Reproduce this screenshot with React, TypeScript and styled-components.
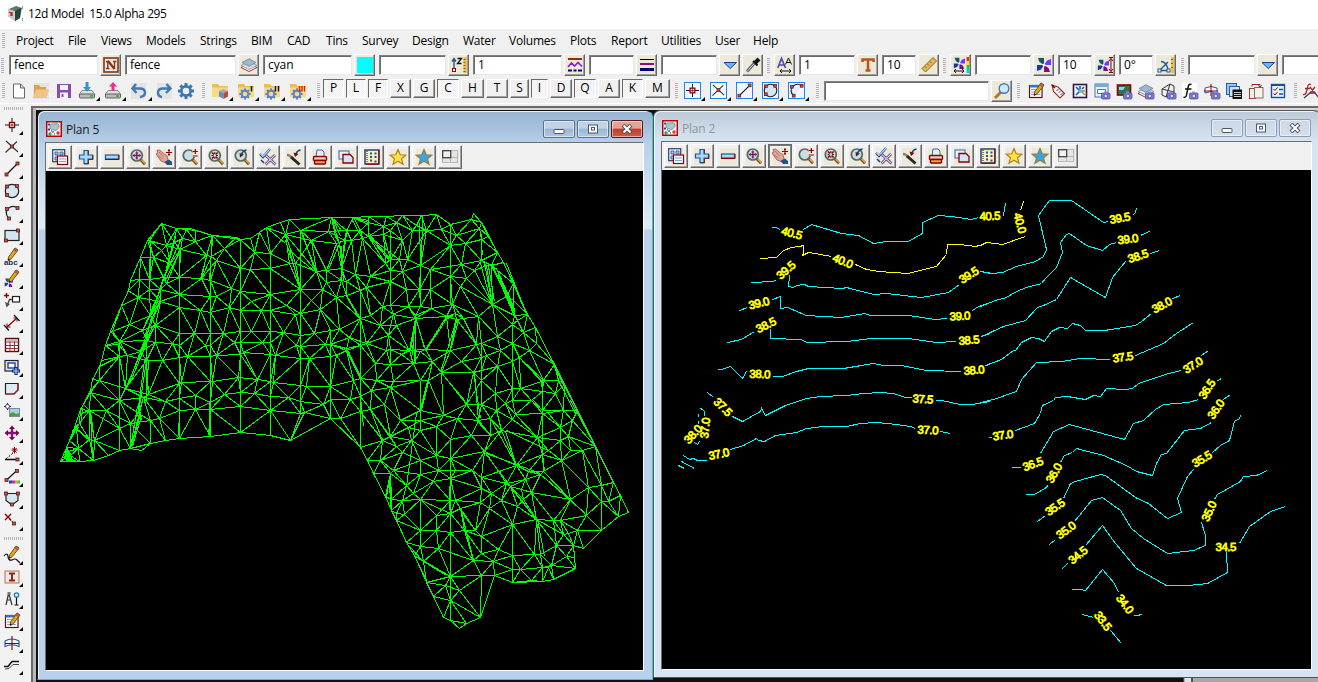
import React from "react";
import styled, { createGlobalStyle, css } from "styled-components";

const Global = createGlobalStyle`
  * { box-sizing: border-box; }
  html, body { margin: 0; padding: 0; overflow: hidden; }
  body { font-family: "Open Sans", "Noto Sans", sans-serif; font-size: 12px; letter-spacing: -0.38px; color: #000; background: #f0f0f0; }
  svg { display: block; }
`;

/* ------------------------------------------------------------------ */
/* Icons                                                               */
/* ------------------------------------------------------------------ */

const R = "#8b0000";
const B = "#1e5799";
const K = "#111";
const N = "none";

const Dot = ({ x, y }: { x: number; y: number }) => (
  <rect x={x - 1.5} y={y - 1.5} width="3" height="3" fill="#b05555" stroke="#6d1a1a" strokeWidth=".8" />
);
const Camera = () => (
  <g>
    <rect x="7.500" y="10" width="8.500" height="6" rx="1" fill="#7c7cd0" stroke="#5050a8" strokeWidth=".8" />
    <rect x="10" y="8.500" width="3" height="2" fill="#8888d8" />
    <circle cx="11.800" cy="13" r="1.800" fill="#dde" stroke="#44a" strokeWidth=".7" />
  </g>
);
const Pencil = ({ x = 0, y = 0 }: { x?: number; y?: number }) => (
  <g transform={`translate(${x} ${y})`}>
    <path d="M12 0 L15 2 L8 11 L5 12.5 L5.500 9Z" fill="#e0a818" stroke="#6b4a10" strokeWidth=".9" />
    <path d="M12 0 L15 2 L13.500 4 L10.800 2Z" fill="#c06060" stroke="#903030" strokeWidth=".5" />
    <path d="M5 12.500 L5.300 10.500 L7 11.500Z" fill={K} />
  </g>
);
const Lens = ({ children }: { children?: React.ReactNode }) => (
  <g>
    <path d="M10.500 10.500 L15 15.200" stroke="#7a4c1c" strokeWidth="2.800" />
    <path d="M11.500 11 L15.200 14.700" stroke="#e0b060" strokeWidth="1.100" />
    <circle cx="6.800" cy="6.500" r="5.500" fill="#c6dfe0" stroke="#566668" strokeWidth="1.700" />
    {children}
  </g>
);
const Gear = ({ c = "#3a76b4", x = 8, y = 8, s = 1 }: { c?: string; x?: number; y?: number; s?: number }) => (
  <g transform={`translate(${x} ${y}) scale(${s})`}>
    <circle r="4.600" fill={N} stroke={c} strokeWidth="2.600" />
    {[0, 45, 90, 135, 180, 225, 270, 315].map((a) => (
      <rect key={a} x="-1.500" y="-8" width="3" height="3.500" fill={c} transform={`rotate(${a})`} />
    ))}
  </g>
);
const Folder = ({ children }: { children?: React.ReactNode }) => (
  <g>
    <path d="M0 1 h6 l1.500 2 h8.500 v11 H0Z" fill="#e6bf57" />
    <path d="M0 4.500 h16 v9.500 H0Z" fill="#f8da83" />
    {children}
  </g>
);
const Pinwheel = ({ x = 0, y = 0, s = 1 }: { x?: number; y?: number; s?: number }) => (
  <g transform={`translate(${x} ${y}) scale(${s})`}>
    <path d="M8 8 L8 1 L2 1 L3.500 5Z" fill="#0a5a6a" />
    <path d="M8 8 L15 8 L15 2 L11 3.500Z" fill="#7038ff" />
    <path d="M8 8 L8 15 L14 15 L12.500 11Z" fill="#7a1080" />
    <path d="M8 8 L1 8 L1 14 L5 12.500Z" fill="#1838a0" />
    <circle cx="8" cy="8" r="1.500" fill="#fff" />
  </g>
);
const Layers = () => (
  <g>
    <path d="M0 10.500 L8 6.500 L16 10.500 L8 14.500Z" fill="#fff" stroke="#b03030" strokeWidth="1" />
    <path d="M0 8.500 L8 4.500 L16 8.500 L8 12.500Z" fill="#d5e0e8" stroke="#8090a0" strokeWidth=".8" />
    <path d="M1 5.500 L8 1.800 L15 5.500 L8 9.300Z" fill="#9db8d0" stroke="#6c8298" strokeWidth=".8" />
  </g>
);
const Drive = ({ up }: { up?: boolean }) => (
  <g>
    <path d="M3 7.500 h10 l3 4 H0Z" fill="#ddd" stroke="#777" strokeWidth=".8" />
    <rect x=".5" y="11" width="15" height="4" rx="1" fill="#bbb" stroke="#555" strokeWidth=".9" />
    <rect x="11" y="12" width="3" height="2" fill="#40c020" />
    {up ? <path d="M8 -1 L12 3.500 H9.500 V8 H6.500 V3.500 H4Z" fill="#f0308a" /> : <path d="M8 8.500 L12 4 H9.500 V-1 H6.500 V4 H4Z" fill="#2f96d0" />}
  </g>
);
const Star = ({ f, s }: { f: string; s: string }) => (
  <path d="M8 0.500 L10.200 5.800 L15.800 6.200 L11.500 9.800 L13 15.300 L8 12.200 L3 15.300 L4.500 9.800 L.2 6.200 L5.800 5.800Z" fill={f} stroke={s} strokeWidth="1.200" />
);

const icons: Record<string, React.ReactNode> = {
  app: (
    <g>
      <path d="M2 4 L9 1 L15 3 L13 13 L8 16 L1 11Z" fill="#5d776c" />
      <path d="M8 6 L14 3 L13 13 L8 16Z" fill="#28453a" />
      <path d="M1 4 L8 6 L8 16 L1 11Z" fill="#c9cfca" />
      <path d="M2 7 l2 1 v3 M5 7 v4" stroke="#c02020" fill={N} strokeWidth="1.300" />
      <path d="M15.500 1 v3 M15.500 13 v3" stroke="#999" />
    </g>
  ),
  nameN: (
    <g>
      <rect x="1" y="1" width="14" height="14" fill="#e8e8f4" stroke="#8c3208" strokeWidth="1.600" />
      <path d="M3 4.500 H6 M10 4.500 h3.500 M3 11.500 h3.500" stroke="#8c3208" strokeWidth="1.400" fill={N} />
      <path d="M4.800 4 V12 M11.500 4 V12" stroke="#8c3208" strokeWidth="1.300" />
      <path d="M5 4 L11.500 12" stroke="#8c3208" strokeWidth="2.300" />
    </g>
  ),
  layers: <Layers />,
  cyan: <rect x="0" y="0" width="16" height="16" fill="#00ffff" />,
  zruler: (
    <g>
      <path d="M3 12 V2 M1 4.500 L3 1.500 L5 4.500" stroke={B} strokeWidth="1.400" fill={N} />
      <rect x="1.500" y="11.500" width="3" height="3" fill="#fff" stroke={R} />
      <path d="M6.500 1.500 h4 L6.500 6.500 h4" stroke={K} strokeWidth="1.300" fill={N} />
      <rect x="12.500" y="0" width="3.500" height="16" fill="#e8c25a" />
      <path d="M12.500 2.500h2M12.500 5.500h2M12.500 8.500h2M12.500 11.500h2M12.500 14.500h2" stroke="#806000" />
    </g>
  ),
  linestyle: (
    <g>
      <rect x="1" y="1" width="14" height="2" fill="#8c3208" />
      <path d="M1 10 L4.500 6 L7.500 9 L11 5.500 L15 9.500" stroke="#8020e0" fill={N} strokeWidth="1.600" />
      <path d="M1 13.500 h4 M6.500 13.500 h3 M11 13.500 h4" stroke="#000080" strokeWidth="2" />
    </g>
  ),
  weight: (
    <g>
      <rect x="1" y="2" width="14" height="1" fill="#000" />
      <rect x="1" y="6" width="14" height="2" fill="#8c1070" />
      <rect x="1" y="11" width="14" height="3" fill="#000080" />
    </g>
  ),
  down: <path d="M2 5.500 H14.500 L8.250 11.500Z" fill="#6ab4ff" stroke="#20408a" strokeWidth="1" />,
  dropper: (
    <g>
      <path d="M2 14.500 L9 6.500" stroke="#555" strokeWidth="2.800" />
      <path d="M2 14.500 L9 6.500" stroke="#cfe4ff" strokeWidth="1" />
      <path d="M8 4 L12.500 8.500" stroke={K} strokeWidth="2" />
      <path d="M10 6 L14 2" stroke={K} strokeWidth="4" />
    </g>
  ),
  fontsize: (
    <g>
      <path d="M.8 11 L4.500 1.500 L8.500 11 M2.500 8 H7" stroke="#4848b0" strokeWidth="1.600" fill={N} />
      <path d="M8.500 7.500 L11.500 1 L14.500 7.500 M9.500 5.500 h4" stroke={K} fill={N} />
      <path d="M3 14 H14 M5 12 L3 14 L5 16 M12 12 L14 14 L12 16" stroke={K} fill={N} />
    </g>
  ),
  bigT: <path d="M2.500 5 V2.500 H13.500 V5 M8 2.500 V13 M5.500 13.500 H10.500" stroke="#b5581c" strokeWidth="2.600" fill={N} />,
  ruler: (
    <g>
      <path d="M1 11.500 L12 .5 L15.500 4 L4.500 15Z" fill="#e5b653" stroke="#8a6420" />
      <path d="M4 9.500 l1.500 1.500 M6.500 7 l1.500 1.500 M9 4.500 l1.500 1.500" stroke="#7a5420" />
    </g>
  ),
  symsize: (
    <g>
      <Pinwheel s={0.8} />
      <path d="M1 14 H11 M3 12 L1 14 L3 16 M9 12 L11 14 L9 16" stroke={K} fill={N} />
      <rect x="13.500" y="0" width="2.500" height="4" fill="#f22" />
      <rect x="13.500" y="4" width="2.500" height="4" fill="#fd0" />
      <rect x="13.500" y="8" width="2.500" height="4" fill="#0d4" />
      <rect x="13.500" y="12" width="2.500" height="4" fill="#0cf" />
    </g>
  ),
  pinwheel: <Pinwheel />,
  pinheight: (
    <g>
      <Pinwheel s={0.8} y={2} />
      <path d="M14 1.500 V14.500 M12 .5 h4 M12 15.500 h4 M12 4 L14 1.500 L16 4 M12 12 L14 14.500 L16 12" stroke={R} fill={N} />
    </g>
  ),
  angle: (
    <g>
      <path d="M1.500 13.500 L10 5 M1.500 13.500 H10 M3 4.500 Q8 4.500 10 12" stroke={B} strokeWidth="1.400" fill={N} />
      <rect x="0" y="12" width="3" height="3" fill="#fff" stroke={B} />
      <rect x="9" y="12" width="3" height="3" fill="#fff" stroke={B} />
      <rect x="13" y="0" width="3" height="16" fill="#e8c25a" />
      <path d="M13 2.500h2M13 6.500h2M13 10.500h2" stroke="#806000" />
    </g>
  ),
  newfile: <path d="M2.500 1 H9.500 L13.500 5 V15 H2.500Z M9.500 1 V5 H13.500" fill="#fff" stroke="#666" />,
  open: (
    <g>
      <rect width="16" height="16" fill="#e4e4e4" />
      <path d="M1 2 h5 l1.500 2 H13 V14 H1Z" fill="#d8a350" />
      <path d="M0 15 L3 6.500 H16 L13.500 15Z" fill="#f0c583" />
    </g>
  ),
  save: (
    <g>
      <path d="M1 1 H15 V15 H1Z" fill="#8a4bab" />
      <rect x="4" y="2" width="8" height="5" fill="#f4f4f4" />
      <rect x="4" y="9.500" width="8" height="5.500" fill="#f4f4f4" />
      <rect x="5.500" y="11" width="2" height="3" fill="#8a4bab" />
    </g>
  ),
  importD: <Drive />,
  exportD: <Drive up />,
  undo: <g><rect width="15" height="16" fill="#e4e4e4" /><path d="M1 5.500 H9 Q14 5.500 14 9.500 Q14 13.500 9 14 M5 1 L1.500 5.500 L5.500 10" stroke="#3f79b7" strokeWidth="2.400" fill={N} /></g>,
  redo: <g><rect x="1" width="15" height="16" fill="#e4e4e4" /><path d="M15 5.500 H7 Q2 5.500 2 9.500 Q2 13.500 6 14 M10.500 1 L14.500 5.500 L10 10" stroke="#3f79b7" strokeWidth="2.400" fill={N} /></g>,
  gear: <Gear />,
  folderCube: (
    <Folder>
      <path d="M7 8 L11.500 6 L16 8 L11.500 10Z" fill="#aaa" />
      <path d="M7 8 L11.500 10 V16 L7 13.500Z" fill="#6a8cc0" />
      <path d="M16 8 L11.500 10 V16 L16 13.500Z" fill="#b84a3a" />
    </Folder>
  ),
  folder1: <Folder><Gear c="#5a84cc" x={7} y={11} s={0.7} /><path d="M13.500 3 V8.500" stroke={K} strokeWidth="1.600" /></Folder>,
  folder2: <Folder><Gear c="#5a84cc" x={7} y={11} s={0.7} /><path d="M11.500 3 V8.500 M14.500 3 V8.500" stroke={K} strokeWidth="1.400" /></Folder>,
  folder3: <Folder><Gear c="#5a84cc" x={7} y={11} s={0.7} /><path d="M9.500 3 V8.500 M12 3 V8.500 M14.500 3 V8.500" stroke="#e02000" strokeWidth="1.400" /></Folder>,
  point: (
    <g>
      <path d="M8 1 V15 M1 8 H15" stroke={K} />
      <rect x="5.500" y="5.500" width="5" height="5" fill="#fff" stroke={R} strokeWidth="1.400" />
      <path d="M8 6.500 v3 M6.500 8 h3" stroke={R} strokeWidth=".8" />
    </g>
  ),
  cross: (
    <g>
      <path d="M2 2 L14 13 M13 2.500 L1.500 13.500" stroke="#333" strokeWidth="1.100" />
      <Dot x={8} y={7.500} />
    </g>
  ),
  line: (
    <g>
      <path d="M2.500 13.500 L13.500 2.500" stroke={K} strokeWidth="1.200" />
      <Dot x={2.500} y={13.500} />
      <Dot x={13.500} y={2.500} />
    </g>
  ),
  circle: (
    <g>
      <circle cx="8" cy="8" r="6.700" fill="#d3e6f2" stroke="#222" strokeWidth="1.200" />
      <Dot x={13} y={3} />
      <Dot x={3} y={12} />
      <Dot x={3} y={3.500} />
    </g>
  ),
  arc: (
    <g>
      <path d="M5 14 Q0 8 4 3.500 Q9 -.5 14 3Z" fill="#e4eef6" />
      <path d="M5 14 Q0 8 4 3.500 Q9 -.5 14 3" fill={N} stroke="#222" strokeWidth="1.200" />
      <Dot x={13.500} y={3} />
      <Dot x={5} y={13.500} />
      <Dot x={3} y={4} />
    </g>
  ),
  rect: (
    <g>
      <rect x="1" y="3.500" width="14" height="10" fill="#d3e6f2" stroke="#222" strokeWidth="1.200" />
      <Dot x={14} y={3.500} />
      <Dot x={2} y={13.500} />
    </g>
  ),
  abc: (
    <g>
      <Pencil x={-1} y={-1} />
      <text x="0" y="16" fontSize="8" fontWeight="700" fill="#18344e" fontFamily="Liberation Sans, sans-serif" letterSpacing="-.1">abc</text>
    </g>
  ),
  symbolPen: (
    <g>
      <Pinwheel s={0.6} y={7} />
      <Pencil y={-1} />
    </g>
  ),
  leader: (
    <g>
      <path d="M0 2.500 H5 M2.500 0 V5" stroke={R} strokeWidth="1.400" />
      <rect x="8.500" y="3.500" width="7" height="5.500" fill="#fff" stroke="#222" strokeWidth="1.200" />
      <path d="M8 6.500 H5.500 L3 13" stroke="#444" fill={N} strokeWidth="1.300" />
      <path d="M1 9 L2.500 14.500 L6 11Z" fill="#555" />
    </g>
  ),
  dim: (
    <g>
      <path d="M3 12 L13 3" stroke={R} strokeWidth="1.200" />
      <path d="M3 8.500 V12 H6.500 M13 6.500 V3 H9.500" stroke={R} fill={N} />
      <path d="M0 10 L5 15.500 M10 0 L15.500 6" stroke={K} strokeWidth="1.200" />
    </g>
  ),
  table: (
    <g>
      <rect x="1.500" y="1.500" width="13" height="13" fill="#fff" stroke="#501010" strokeWidth="1.400" />
      <path d="M1.500 5 H14.500 M1.500 8.500 H14.500 M1.500 11.500 H14.500 M6 2 V14.500 M10.500 2 V14.500" stroke="#a02828" />
      <rect x="2" y="2" width="12" height="2.500" fill="#d8b0b0" />
    </g>
  ),
  viewport: (
    <g>
      <rect x="1" y="1.500" width="13" height="10.500" fill="#dfe8f0" stroke="#222" strokeWidth="1.200" />
      <rect x="4" y="4" width="7" height="5" fill="#fff" stroke="#1030a0" strokeWidth="1.300" />
      <path d="M12 8 V16 M8 12 H16" stroke="#102080" strokeWidth="3.200" />
      <path d="M12 9 V15 M9 12 H15" stroke="#9ed8ff" strokeWidth="1.200" />
    </g>
  ),
  sheet: (
    <g>
      <path d="M1.500 2.500 H14 V9 L10 13 H1.500Z" fill="#e0eaf2" stroke="#222" strokeWidth="1.200" />
      <path d="M14 3 V9 L10 13 H1.500" fill={N} stroke="#a02020" strokeWidth="1.200" />
    </g>
  ),
  image: (
    <g>
      <path d="M3.500 0 V7 M0 3.500 H7" stroke={R} strokeWidth="1.200" />
      <circle cx="3.500" cy="3.500" r="2" fill="#fff" stroke="#2050a0" />
      <rect x="5.500" y="5.500" width="10" height="8" fill="#9cd4f8" stroke="#888" />
      <path d="M6 13 V10.500 L9 9 L12 11 L15 10 V13Z" fill="#50a030" />
    </g>
  ),
  move: (
    <g>
      <path d="M8 3 V13 M3 8 H13" stroke="#8a1080" strokeWidth="2.400" fill={N} />
      <path d="M8 .5 L11 4 H5Z M8 15.500 L11 12 H5Z M.5 8 L4 5 V11Z M15.500 8 L12 5 V11Z" fill="#7a0a3a" />
    </g>
  ),
  bearing: (
    <g>
      <path d="M1 12.500 H13" stroke={K} strokeWidth="1.600" />
      <path d="M2 12 L9 6" stroke={K} strokeDasharray="2 1.500" />
      <path d="M10.500 0 V6.500 M7.500 3 H13.500 M8.500 1 L12.500 5.500 M12.500 1 L8.500 5.500" stroke={R} />
      <Dot x={13.500} y={12.500} />
    </g>
  ),
  colorline: (
    <g>
      <path d="M2 11.500 L13 1.500" stroke={K} strokeWidth="1.200" />
      <Dot x={13} y={2} />
      <Dot x={2.500} y={11} />
      <rect x="5" y="11.500" width="3" height="3" fill="#2040e0" />
      <rect x="8" y="11.500" width="3" height="3" fill="#e020c0" />
      <rect x="11" y="11.500" width="2.500" height="3" fill="#f0a000" />
      <rect x="13.500" y="11.500" width="2.500" height="3" fill="#20d040" />
    </g>
  ),
  polygon: (
    <g>
      <path d="M2 2.500 H14 V9.500 L8 14 L2 9.500Z" fill="#d5e6ee" stroke="#222" strokeWidth="1.200" />
      <Dot x={2} y={2.500} />
      <Dot x={14} y={2.500} />
      <Dot x={8} y={13.500} />
    </g>
  ),
  delpoint: (
    <g>
      <path d="M1 1 L7 7 M7 1 L1 7" stroke={R} strokeWidth="1.400" />
      <path d="M5.500 6.500 L9 9" stroke={K} strokeDasharray="1.500 1" />
      <Dot x={10} y={10.500} />
    </g>
  ),
  sketch: (
    <g>
      <Pencil y={-1} />
      <path d="M0 9 Q3 5 4 9 Q4 14 8 13 Q11 11 13 13 L16 16" fill={N} stroke={K} strokeWidth="1.200" />
    </g>
  ),
  ibeam: (
    <g>
      <rect x="1" y="2" width="14" height="12" fill="#e8e6ee" stroke="#c07048" />
      <path d="M5 4.500 H11 M8 4.500 V11.500 M5 11.500 H11" stroke="#8c2c08" strokeWidth="2" />
    </g>
  ),
  survey: (
    <g>
      <path d="M4.500 3 L2 14 M5 3 L8 14 M3.500 9 H6.500" stroke="#333" strokeWidth="1.200" />
      <rect x="3.500" y="1" width="3" height="3" fill="#777" />
      <circle cx="12.500" cy="4" r="2.200" fill="#dff0ff" stroke="#1880c8" strokeWidth="1.300" />
      <path d="M12.500 6.500 V14 M10.500 14 h4" stroke={K} strokeWidth="1.200" />
    </g>
  ),
  notepen: (
    <g>
      <rect x="1.500" y="2.500" width="12.500" height="12" fill="#fff" stroke="#601018" strokeWidth="1.200" />
      <rect x="1.500" y="2" width="12" height="2.500" fill="#3870c8" />
      <path d="M3 6.500 h9 M3 9 h9 M3 11.500 h9" stroke="#8aa0d0" />
      <Pencil x={1} />
    </g>
  ),
  section: (
    <g>
      <path d="M1 11.500 V6 Q8 2 15 6 V11.500 Q8 8 1 11.500Z" fill="#f6f8ff" stroke="#3050a0" strokeWidth="1.100" />
      <path d="M8 1 V15 M1 8.500 H15" stroke={R} strokeWidth="1.100" />
    </g>
  ),
  ramp: (
    <g>
      <path d="M0 9.500 H4 L8 4.500 H15" stroke={K} strokeWidth="1.500" fill={N} />
      <path d="M1 12 L5 11.500 L9 7.500 H15" stroke="#444" strokeWidth="1" fill={N} />
    </g>
  ),
  search: (
    <g>
      <path d="M1 15 L7 9" stroke="#b07828" strokeWidth="3" />
      <circle cx="10" cy="5.500" r="4.800" fill="#cdeafa" stroke="#4878b0" strokeWidth="1.400" />
    </g>
  ),
  tag: (
    <g>
      <path d="M2 2 L8 4 L14.500 10.500 L10 15 L3.500 8.500Z" fill="#fff" stroke="#a03020" strokeWidth="1.200" />
      <path d="M2 2 L5 5" stroke={R} strokeWidth="1.600" />
      <path d="M6.500 8 L9 5.500 M8.500 10 L11 7.500 M10.500 12 L13 9.500" stroke="#385090" />
    </g>
  ),
  network: (
    <g>
      <rect x="1.500" y="1.500" width="13" height="13" fill="#eef6ff" stroke="#301840" strokeWidth="1.600" />
      <path d="M4 4 l4 4 -4 4 M8 3 v3 M12 4 l-2 2" stroke="#1860b0" strokeWidth="1.600" fill={N} />
      <path d="M10 9 l3 3 M10 8 h3" stroke="#d08020" strokeWidth="1.400" />
      <circle cx="8.500" cy="8" r="1.800" fill="#60b0f0" />
    </g>
  ),
  camView: <g><rect x="1" y="1" width="13" height="13" fill="#e8f2fb" stroke="#4878b0" /><rect x="1" y="1" width="13" height="3" fill="#78a8d8" /><path d="M3.500 6.500h8v4h-8z" fill="#fff" stroke="#4878b0" /><Camera /></g>,
  camImage: <g><rect x="1.500" y="2" width="13" height="10" fill="#2a7a4a" stroke={R} strokeWidth="1.600" /><path d="M3 4 h6 l-2 3 h-4z" fill="#9cf" /><Camera /></g>,
  camLayers: <g><Layers /><Camera /></g>,
  camMesh: <g><path d="M2 6 L10 1 L14 3 V12 L6 14 L2 12Z M2 6 L14 9 M10 1 L6 14" fill="#eee" stroke="#333" /><Camera /></g>,
  camFx: <g><rect width="15" height="16" fill="#fff" /><path d="M9.500 1.500 Q6.500 0 6 5 L4.500 12 Q4 15 1.500 14 M3 6 H9.500" fill={N} stroke={K} strokeWidth="1.500" /><Camera /></g>,
  camSection: <g><path d="M1 10 V5 Q7 2 13 5 V10 Q7 7 1 10Z" fill="#fff" stroke="#3050a0" /><path d="M7 1 V13 M0 8 H14" stroke={R} /><Camera /></g>,
  windows: <g><rect x=".5" y=".5" width="10" height="11" fill="#9cc4ec" stroke="#2860a8" /><rect x="3.500" y="3.500" width="10" height="10" fill="#cfe2f6" stroke="#2860a8" /><rect x="6.500" y="6.500" width="9.500" height="9.500" fill="#111" /><path d="M8 9.500h7M8 11.500h7M8 13.500h7" stroke="#ccc" /></g>,
  papers: <g><rect x="1.500" y="5.500" width="6" height="10" fill="#eee" stroke="#a04030" /><rect x="6.500" y="4.500" width="8.500" height="10.500" fill="#f4f4e8" stroke="#807060" /><path d="M4 3.500 V1.500 h8 v3 M10.500 2.500 l1.500 2 1.500 -2" stroke="#a02020" fill={N} /></g>,
  checklist: <g><rect x="1.500" y="1.500" width="13" height="13" fill="#e8f2fb" stroke="#1850a0" strokeWidth="1.400" /><rect x="1.500" y="1" width="13" height="2" fill="#1850a0" /><path d="M3.500 6 l1.500 1.500 2.500 -3 M3.500 10.500 l1.500 1.500 2.500 -3" stroke={R} fill={N} /><path d="M9 6.500h4M9 11h4" stroke="#1850a0" strokeWidth="1.500" /></g>,
  fx: <g><path d="M8 1.500 Q5 0 4.500 5 L3 10 Q2.500 12 0 11.500 M2 5.500 H7 M7 4 L12 10 M12 4 L7 10" stroke="#a02828" fill={N} strokeWidth="1.300" /><path d="M1 15 L7 10 L12 10 L16 15" stroke="#444" fill={N} strokeWidth="1.300" /></g>,
  viewmenu: (
    <g>
      <rect x=".7" y=".7" width="12" height="12" fill="#e8f0fa" stroke="#204080" strokeWidth="1.200" />
      <path d="M3 3h3v3h-3zM8 3h3v3h-3zM3 8h3v3h-3z" fill="#9cc8f0" stroke="#204080" strokeWidth=".7" />
      <rect x="5.500" y="7" width="10" height="8.500" fill="#fff" stroke={R} strokeWidth="1.200" />
      <path d="M7 10h7M7 12.500h7" stroke="#70a8e0" />
    </g>
  ),
  plus: <g><path d="M6 1.500 H10 V6 H14.500 V10 H10 V14.500 H6 V10 H1.500 V6 H6Z" fill="#a8dcff" stroke="#20568c" strokeWidth="1.200" /><path d="M10.500 1.500 V5.500 M15 6 V10.500 H10.500 V15 H6" stroke="#601020" strokeWidth=".8" fill={N} /></g>,
  minus: <g><rect x="1.500" y="6" width="13" height="4" fill="#a8dcff" stroke="#20568c" strokeWidth="1.200" /><path d="M1 10.500 H15 V6" stroke={R} fill={N} /></g>,
  fit: <Lens><path d="M6.800 2.500 V10.500 M2.800 6.500 H10.800" stroke="#8a1060" strokeWidth="1.300" /><path d="M5.500 4 h2.600 M5.500 9 h2.600 M4.300 5.200 v2.600 M9.300 5.200 v2.600" stroke="#8a1060" /></Lens>,
  pan: (
    <g>
      <path d="M0 5 L2 4 L1 1.500 L3.500 1 L9 5.500 L11 6.500 L12 11 L9 13.500 L5 12Z" fill="#e0a89c" stroke="#a06058" strokeWidth=".9" />
      <path d="M3 3 L7.500 8 M1.500 6.500 L6.500 10" stroke="#a86860" strokeWidth=".8" />
      <path d="M8.500 13 L13 10.500 L16 13 V16 H11Z" fill="#24508c" />
      <path d="M13 0 V7 M9.800 3.500 H16 M12 1.500 h2 M12 5.500 h2" stroke={R} />
    </g>
  ),
  zoom: <g><Lens /><rect x="10.500" y="0" width="5.500" height="8" fill="#ece9d8" /><path d="M13.300 0 V5 M10.800 2.500 H15.800 M10.800 7 H15.800" stroke={R} strokeWidth="1.200" /></g>,
  shrink: <Lens><path d="M4 3.500 l2 2 M9.600 3.500 l-2 2 M4 9.500 l2 -2 M9.600 9.500 l-2 -2" stroke={R} strokeWidth="1.600" /><path d="M3.500 6.500h2M8 6.500h2M6.800 3v2M6.800 8v2" stroke={R} /></Lens>,
  zoomprev: <Lens><path d="M5.500 4 L10 5.500 L6 8.500Z" fill={R} /><path d="M7 6 Q9 1.500 12.500 1" stroke="#0c4880" strokeWidth="1.600" fill={N} /></Lens>,
  checkx: (
    <g>
      <path d="M0 5 L3 8 L10 0" stroke="#283c88" strokeWidth="2.400" fill={N} />
      <path d="M1 11 L4 14" stroke="#283c88" strokeWidth="1.600" />
      <path d="M6 6.500 L15.500 15.500 M15 6 L5.500 15.500" stroke="#7c2050" strokeWidth="2.600" />
      <path d="M6 6.500 L15.500 15.500 M15 6 L5.500 15.500 M.5 5 L3 7.500 L10 0" stroke="#a8dcff" strokeWidth="1.200" fill={N} />
    </g>
  ),
  brush: (
    <g>
      <path d="M1 6 Q4 6 6 9" stroke="#8a8070" strokeWidth="2.400" fill={N} />
      <path d="M5 8 L13.500 15.500" stroke="#282828" strokeWidth="3" />
      <path d="M14.500 1 Q11 1.500 10 5" stroke="#0c4880" strokeWidth="1.400" fill={N} />
      <path d="M7.500 3.500 L9 8 L12.500 5Z" fill={R} />
    </g>
  ),
  print: (
    <g>
      <path d="M5 1 h5 l2 2 v5 H4Z" fill="#e6f2ff" stroke="#3068b0" />
      <rect x="1.500" y="7.500" width="13" height="4" rx="1" fill="#e8d0c0" stroke={R} strokeWidth="1.400" />
      <rect x="2.500" y="11.500" width="11" height="3.500" rx="1" fill="#e0a858" stroke={R} strokeWidth="1.400" />
    </g>
  ),
  copyview: (
    <g>
      <rect x="1" y="2" width="10" height="8" fill="#e8f2ff" stroke="#3068b0" />
      <path d="M5 5.500 H12 L15 8.500 V14 H5Z" fill="#cfe6fa" stroke={R} strokeWidth="1.300" />
    </g>
  ),
  building: (
    <g>
      <rect x="1" y="1" width="14" height="14" fill="#f4f0c0" stroke="#203870" strokeWidth="1.400" />
      <path d="M14.800 1 V15 M2 15.200 H15" stroke={R} />
      <path d="M6 4.500h2M10.500 4.500h2M6 8h2M10.500 8h2M10.500 12.500h2M6 11.500h2" stroke="#304c90" strokeWidth="2" />
      <path d="M3 2 V14" stroke={K} strokeDasharray="1 1" />
    </g>
  ),
  starY: <Star f="#ffe14a" s="#b08418" />,
  starB: <Star f="#30a8ea" s="#9a7c48" />,
  quad: (
    <g>
      <rect width="16" height="16" fill="#efefef" />
      <rect x=".5" y="1.500" width="15" height="12" fill="#e4e4e4" stroke="#b8b8b8" />
      <path d="M8.500 1.500 V13.500 M.5 8.500 H15.500" stroke="#b8b8b8" />
      <rect x=".7" y="1.700" width="8" height="7" fill="#f0f0f0" stroke="#444" strokeWidth="1.300" />
    </g>
  ),
  plan: (
    <g>
      <rect x=".75" y=".75" width="14.500" height="14.500" fill="#fff" stroke="#b80000" strokeWidth="1.500" />
      <path d="M4 4.500 Q4.500 2 8 3 Q12 1.500 13 4 Q14 7 11.500 8 Q10 11 8 9 Q5 9.500 4 7Z" fill="#a8c4cc" stroke="#6f8f98" strokeWidth=".9" />
      <rect x="2" y="2.500" width="2" height="2" fill="#7030a0" />
      <rect x="2" y="7.500" width="2" height="2" fill="#3030c0" />
      <path d="M4 11 v4 M2 13 h4" stroke="#109020" strokeWidth="1.200" />
      <path d="M12 10 v4 M10 12 h4" stroke="#e01010" strokeWidth="1.200" />
      <path d="M7 10 v2 M8 13 h1 M5 10 h1" stroke="#2040a0" strokeWidth="1.200" />
    </g>
  ),
};

const Icon = ({ name, size = 16 }: { name: string; size?: number }) => (
  <svg width={size} height={size} viewBox="0 0 16 16" overflow="visible">{icons[name]}</svg>
);

/* ------------------------------------------------------------------ */
/* Shell parts                                                         */
/* ------------------------------------------------------------------ */

const Shell = styled.div`
  width: 1318px; height: 682px; overflow: hidden;
  display: flex; flex-direction: column; background: #f0f0f0;
`;
const TitleBar = styled.div`
  height: 29px; flex: none; background: #fff; display: flex; align-items: center; gap: 5px; padding: 0 0 3px 7px;
  white-space: pre;
`;
const gripV = css`
  background: repeating-linear-gradient(to bottom, #b4b4b4 0 1px, transparent 1px 2px);
`;
const Grip = styled.div<{ $ml?: number; $mr?: number }>`
  width: 3px; height: 15px; flex: none; ${gripV}
  margin: 0 ${(p) => p.$mr ?? 4}px 0 ${(p) => p.$ml ?? 4}px;
`;
const MenuBar = styled.div`
  height: 24px; flex: none; display: flex; align-items: center; padding-bottom: 2px; background: #f0f0f0;
`;
const MenuItem = styled.div<{ $w: number }>`
  width: ${(p) => p.$w}px; flex: none; white-space: nowrap; letter-spacing: -0.22px;
`;
const StyleBar = styled.div`
  height: 24px; flex: none; display: flex; align-items: center; background: #f0f0f0;
`;
const Pair = styled.div`
  display: flex; align-items: center; gap: 2px; margin-right: 4px; flex: none;
`;
const Field = styled.div<{ $w: number }>`
  width: ${(p) => p.$w}px; height: 20px; flex: none; background: #fff;
  border: 1px solid; border-color: #828282 #e8e8e8 #e8e8e8 #828282;
  box-shadow: inset 1px 1px 0 #6a6a6a, inset -1px -1px 0 #fff;
  padding: 0 4px; line-height: 17px; letter-spacing: -0.1px; white-space: nowrap;
`;
const raised = css`
  border: 1px solid; border-color: #fff #696969 #696969 #fff;
  box-shadow: inset -1px -1px 0 #a0a0a0;
`;
const ToolButton = styled.div`
  width: 21px; height: 22px; flex: none; background: #ece9d8; ${raised}
  display: flex; align-items: center; justify-content: center;
  svg { width: 16px; height: 16px; }
`;
const CommandBar = styled.div`
  height: 26px; flex: none; display: flex; align-items: center; padding-top: 1px; background: #f0f0f0;
`;
const Flat = styled.div<{ $w: number; $corner?: boolean }>`
  width: ${(p) => p.$w}px; height: 20px; flex: none; display: flex; align-items: center; position: relative;
  ${(p) => p.$corner && css`
    &::after { content: ""; position: absolute; left: 17px; bottom: 0; border: solid transparent; border-width: 0 0 4px 4px; border-bottom-color: #000; }
  `}
`;
const Boxed = styled.div`
  width: 17px; height: 17px; border: 1px solid #1c86ee; background: #f4f8fc; display: flex; align-items: center; justify-content: center;
`;
const Letter = styled.div<{ $w: number; $on: boolean }>`
  width: ${(p) => p.$w}px; height: 19px; flex: none; text-align: center; line-height: 16px; letter-spacing: 0;
  margin-bottom: 4px;
  ${(p) => p.$on
    ? css`border: 1px solid; border-color: #696969 #fff #fff #696969; background: repeating-conic-gradient(#fff 0 25%, #ececec 0 50%) 0 0 / 2px 2px;`
    : css`background: #f0f0f0; ${raised}`}
`;
const Letters = styled.div`
  display: flex; gap: 2px; flex: none; align-items: center;
`;

const Body = styled.div`
  flex: 1; min-height: 0; display: flex; border-top: 1px solid #fff;
`;
const Side = styled.div`
  width: 31px; flex: none; background: #f2f2f2; padding: 3px 0 0 4px; display: flex; flex-direction: column; overflow: hidden;
`;
const SideGrip = styled.div<{ $mt?: number }>`
  width: 20px; height: 3px; flex: none; margin: ${(p) => p.$mt ?? 0}px 0 4px;
  background: repeating-linear-gradient(to right, #b4b4b4 0 1px, transparent 1px 2px);
`;
const SideItem = styled.div`
  height: 22px; flex: none; position: relative; display: flex; align-items: center;
  &::after { content: ""; position: absolute; left: 15px; bottom: 1px; border: solid transparent; border-width: 0 0 4px 4px; border-bottom-color: #000; }
`;
const Mdi = styled.div`
  flex: 1; min-width: 0; display: flex; align-items: flex-start; margin-top: 2px;
  background: linear-gradient(to right, #101010 1150px, #d7e4f2 1152px 1158px, #555 1158px 1160px, #a8a8a8 1160px);
  border-left: 2px solid #696969; border-top: 2px solid #696969;
  box-shadow: inset 3px 0 0 #b8b8b8, inset 0 2px 0 #d8d8d8;
  padding: 2px 0 0 4px; overflow: hidden;
`;

const Win = styled.div<{ $w: number; $active: boolean }>`
  width: ${(p) => p.$w}px; flex: none; display: flex; flex-direction: column;
  border: 1px solid ${(p) => (p.$active ? "#151515" : "#555")};
  border-bottom-color: ${(p) => (p.$active ? "#35c8e0" : "#555")};
  border-right-color: ${(p) => (p.$active ? "#35c8e0" : "#d7e4f2")};
  border-radius: 7px 7px 0 0;
  box-shadow: inset 1px 1px 0 rgba(255,255,255,.75);
  background: ${(p) => (p.$active
    ? "linear-gradient(#98b4d1 0, #a6c0dc 16px, #b9d1ea 34px, #d0e0f2 80px, #e0eaf6 118px, #b9d1ea 119px, #b9d1ea 100%)"
    : "linear-gradient(#bccad8 0, #c9d6e3 14px, #d7e4f2 30px, #d7e4f2 100%)")};
  padding: ${(p) => (p.$active ? "0 8px 8px 7px" : "0 7px")};
  padding-bottom: ${(p) => (p.$active ? 8 : 7)}px;
`;
const Caption = styled.div<{ $active: boolean }>`
  height: ${(p) => (p.$active ? 31 : 30)}px; flex: none; display: flex; align-items: center; gap: 4px; padding: 4px 1px 0 1px;
  color: ${(p) => (p.$active ? "#1a1a1a" : "#8f989f")};
`;
const CaptionText = styled.div`
  flex: 1; letter-spacing: -0.2px; padding-top: 1px;
`;
const CaptionButtons = styled.div`
  display: flex; gap: 2px;
`;
const CaptionButton = styled.div<{ $tone: "blue" | "red" | "pale" }>`
  width: 32px; height: 18px; border-radius: 2px; display: flex; align-items: center; justify-content: center;
  border: 1px solid ${(p) => ({ blue: "#5a7190", red: "#561818", pale: "#8b9db5" })[p.$tone]};
  box-shadow: inset 0 0 0 1px rgba(255,255,255,.5);
  background: ${(p) => ({
    blue: "linear-gradient(#c0d2e6 0 45%, #9cb5d0 50%, #b2c9e2)",
    red: "linear-gradient(#e8a294 0 45%, #bc3f2a 50%, #cc6048)",
    pale: "linear-gradient(#cbd8e5, #d3dfec)",
  })[p.$tone]};
`;
const Client = styled.div`
  display: flex; flex-direction: column; background: #000;
  border: 1px solid #6e6e6e; border-right-color: #fff; border-bottom-color: #fff;
`;
const ViewBar = styled.div`
  height: 28px; flex: none; background: #f0f0f0; display: flex; align-items: center; gap: 2px; padding-left: 2px;
`;
const ViewButton = styled.div<{ $pressed?: boolean }>`
  width: 24px; height: 24px; flex: none; background: #f0f0f0; display: flex; align-items: center; justify-content: center;
  ${raised}
  ${(p) => p.$pressed && css`border: 1px solid #696969; box-shadow: inset 1px 1px 0 #777, inset -1px -1px 0 #888;`}
`;
const IconPlate = styled.div`
  background: #ece9d8; width: 17px; height: 17px; display: flex; align-items: center; justify-content: center;
`;
const Canvas = styled.svg`
  flex: none; background: #000;
`;

/* ------------------------------------------------------------------ */
/* Terrain mesh                                                        */
/* ------------------------------------------------------------------ */

type P = [number, number];
const parse = (s: string, ox: number, oy: number): P[] =>
  s.trim().split(/\s+/).map((t) => {
    const [x, y] = t.split(",").map(Number);
    return [x / 3 + ox, y / 3 + oy];
  });

/* Survey data is stored in thirds of a pixel, split into a west and an east block. */
const west = (s: string) => parse(s, 50, 200);
const east = (s: string) => parse(s, 340, 200);

const outline: P[] = [
  ...west("30,785 48,742 57,720 72,683 92,628 100,612 120,570 128,537 147,500 154,482 167,437 182,395 215,315 234,270 242,240 270,171 291,122 333,70 378,85 420,85 487,105 572,118 600,114 628,98 648,81 690,68 718,57 845,51"),
  ...east("40,53 85,48 140,49 187,46 245,46 290,43 332,73 393,57 401,40 425,67 445,108 472,157 490,187 520,250 563,343 587,382 643,493 672,552 712,632 765,738 820,847 840,886 866,937 835,950 785,991 730,1046 700,1035 707,1105 640,1137 606,1143 516,1147 463,1125 420,1253 380,1270 358,1285 332,1262 310,1252 280,1188 258,1147 222,1065 200,1028 168,962 155,930 137,890 100,820 81,780 62,742"),
  ...west("842,655 720,720 660,706 572,697 480,709 388,715 345,720 300,730 274,751 242,745 208,751 175,765 130,781 88,784"),
];

const interior: P[] = [
  ...west(`298,122 310,171 298,237 268,238 298,267 264,291 302,345 237,372 208,425 208,468 232,465 277,390 290,420 315,375 315,428 272,455 338,480 290,480
  120,578 147,540 226,566 208,600 295,582 280,593 118,632 168,630 208,686 88,670 78,685 118,717 133,720 85,745 62,765 50,770 55,755 66,780 44,776 240,670 265,640 300,660 328,655 345,605
  388,594 388,630 388,550 395,548 436,587 436,628 480,545 487,545 523,584 480,628 480,606 566,532 572,576 572,620 612,580 622,538 660,545 670,548 660,588 660,632 715,592 752,556 770,560 752,605 752,640 762,638 820,612 842,560 842,598 870,655
  350,135 333,150 372,127 360,190 396,115 392,147 410,88 436,125 436,92 468,165 485,170 500,180 523,145 560,113 453,236 480,242 388,231 348,250 340,232 330,268 330,305 388,283 388,322 480,290 498,288 543,266 537,322 452,330 480,336
  572,275 605,304 572,330 600,208 572,206 612,158 660,160 660,206 718,190 706,103 752,90 835,95 785,122 800,215 735,190 752,268 830,210 818,268 828,248 660,282 708,315 660,332 634,332 735,343 752,340 784,300 812,328 860,293 868,387 860,130 875,205 875,240
  388,401 432,400 388,435 368,430 388,473 412,470 480,400 520,400 480,435 466,435 552,428 480,468 500,466 572,394 572,428 580,458 572,463 605,394 638,428 660,394 660,428 660,462 676,465 700,397 752,405 738,436 752,438 752,475 778,475 793,400 842,390 825,432 842,432 842,470 858,465 890,445 186,393 205,434`),
  ...east(`85,68 62,90 18,92 130,80 130,103 152,90 168,68 217,90 230,75 258,90 305,88 348,105 418,85 85,108
  12,120 35,120 68,115 187,122 332,135 375,130 424,118 135,190 152,178 178,178 203,178 242,197 364,192 424,182 440,197 455,197
  45,222 18,245 90,230 152,212 187,215 152,245 272,208 332,230 378,235 403,210 62,270 80,263 18,285 200,267 238,268 272,268 362,258 338,312 500,290 520,300
  128,320 152,315 160,342 205,320 242,320 275,325 345,340 318,350 350,357 370,355 415,348 457,312 62,355 92,345 122,375 152,376 170,376 227,345 225,355 516,372 533,360 524,345
  27,413 62,435 80,430 145,405 140,450 152,448 208,452 240,455 255,448 105,490 152,493 220,490 185,462 18,450 278,483 330,450 365,485 410,433 424,430 438,465 424,472 480,450 472,408 516,430 550,398 568,450 590,430 537,473 472,498 516,485
  62,535 40,540 110,540 152,562 160,545 242,540 265,540 303,517 400,517 424,512 424,540 465,580 516,565 540,565 605,545 610,540 575,600 606,575 645,580 655,540 30,598 62,590 95,572
  90,628 132,612 62,635 182,660 242,632 242,660 310,645 290,678 352,655 380,612 415,660 424,612 468,632 450,655 495,610 516,600 525,643 516,658 606,632 606,640 660,683 697,660 670,630 485,690 204,682 152,710 128,720 242,692
  168,738 187,758 122,780 215,722 242,780 290,765 332,717 393,705 450,705 433,753 592,712 625,750 606,762 665,780 685,708 727,750 690,752 660,720 530,795 332,775 160,810 295,812 332,810
  152,820 242,822 200,855 280,845 220,880 332,835 345,812 397,812 424,833 424,866 500,850 510,858 555,838 565,815 610,815 600,822 545,868 575,878 455,880 745,862 785,855 690,898 240,897 187,902 155,897 332,900 345,900 805,903
  168,940 193,942 288,947 332,940 360,925 420,908 447,925 485,900 533,918 550,898 590,958 516,972 640,960 660,960 740,945 785,905 242,990 288,990 332,997 372,992 405,992 424,1010 712,992 670,1003 685,1000
  242,1040 295,1046 250,1083 424,1060 400,1080 475,1048 460,1083 516,1065 583,1062 600,1062 648,1035 678,1068 516,1108 540,1108 606,1103 625,1103 635,1095 424,1125 332,1130 316,1155 357,1170 332,1200 703,1073 575,1140`),
];

/* Break lines: the narrow slivers along banks and drains. */
const westBreaks = `845,51 855,110 868,130|845,51 875,90|846,55 862,118|848,55 870,110|835,95 860,130|860,130 830,210|868,130 835,208|875,140 880,240|890,100 875,205|870,140 876,205 872,240|392,147 348,250|390,150 344,245|392,120 340,232|378,90 345,215|372,127 355,190 340,245|468,165 453,236|472,160 450,236|485,105 480,242|483,150 478,242|330,268 302,345|328,290 303,345|340,232 303,345|330,268 277,390|330,305 285,410|325,310 280,415|315,375 277,450|315,375 290,420|310,375 272,450|298,380 272,455|305,350 290,415|290,420 226,566|272,455 232,560|288,430 240,545|290,420 290,600|285,420 275,455|294,480 290,600|280,593 242,745|262,620 240,745|268,600 262,650|265,610 275,660|270,640 245,740|274,645 248,740|290,480 268,620|284,480 265,620|88,670 118,717|72,683 118,720|80,685 110,712|66,690 88,683|92,628 88,670|96,625 90,680|60,718 80,683|58,722 76,686|95,640 118,632|120,635 133,720|120,635 127,775|300,120 298,237|302,122 302,235|752,90 800,215|755,92 790,200|706,103 800,215|718,150 790,210|718,150 752,268|706,120 745,240|648,81 706,130|480,630 475,705|388,630 385,710|118,632 208,686|333,70 372,127|291,122 350,135|868,130 880,240|858,100 868,130|880,150 875,240|208,425 208,751|298,267 302,345|388,147 388,715|480,242 480,709|478,606 478,709|570,560 572,697|572,118 572,697|660,160 660,706|752,90 752,640|842,390 842,655|55,755 50,780|40,760 70,782|45,750 68,765|40,772 65,758|48,785 60,760|56,786 50,762`;
const eastBreaks = `85,108 152,185|90,112 180,180|88,100 135,170|95,112 150,178|40,53 85,60|42,56 85,72|50,52 75,70|458,197 524,345|465,215 524,350|475,225 533,360|472,210 500,290|480,230 510,320|470,205 520,320|485,240 522,335|237,70 242,190|248,50 243,195|225,355 215,480|227,355 225,490|227,350 253,445|225,365 210,450|220,400 222,490|220,490 242,540|265,545 245,630|262,545 242,625|345,360 330,450|355,360 335,440|350,360 338,425|350,357 300,517|318,350 255,448|322,352 260,448|345,340 320,352|303,517 380,612|310,525 375,605|432,753 530,795|435,760 510,860|440,760 600,820|445,770 500,850|510,858 590,958|515,865 585,955|332,717 330,940|335,835 328,930|327,860 332,940|424,100 424,182|427,150 424,182|403,517 415,660|400,517 420,655|415,660 450,705|408,660 450,705|62,640 62,740|62,590 70,680|65,640 130,720|90,628 168,738|100,640 150,710|152,820 140,890|148,830 152,925|150,820 150,925|222,1065 332,1130|225,1070 320,1125|222,1065 258,1140|205,1035 250,1083|590,958 583,1062|590,958 600,1062|590,958 670,1003|610,815 690,898|606,760 613,815|575,878 690,898|690,898 740,945|600,822 735,940|457,312 516,372|362,258 457,312|432,190 457,312|420,190 455,310|445,200 462,305|643,493 606,545|606,545 537,473|18,450 62,535|25,455 60,530|18,285 62,355|20,290 58,355|230,640 200,860|38,60 68,115|332,73 332,310|152,90 152,245|242,197 242,320|62,270 62,435|242,540 242,692|332,997 332,1262|516,372 516,600|516,972 516,1147|606,545 606,762|495,695 530,795|485,690 592,712|500,690 625,750|785,855 785,991|765,738 785,855|697,660 765,738|727,750 745,862|580,600 606,632|606,632 712,632|340,345 310,360|450,655 530,795|625,640 660,683|240,897 288,947|245,900 330,940|593,958 612,1070|360,925 400,1080|362,930 405,992|430,75 472,157|500,190 560,340|495,200 555,335|640,495 712,632|655,540 705,640|690,600 765,738`;

function triangulate(pts: P[]): [number, number, number][] {
  const n = pts.length;
  const all: P[] = pts.map(([x, y], i) => [x + ((i * 37) % 11) * 0.003, y + ((i * 53) % 13) * 0.003]);
  all.push([-4000, -4000], [5000, -4000], [300, 6000]);
  type T = { v: [number, number, number]; cx: number; cy: number; r: number };
  const make = (a: number, b: number, c: number): T => {
    const [ax, ay] = all[a], [bx, by] = all[b], [cx, cy] = all[c];
    const d = 2 * (ax * (by - cy) + bx * (cy - ay) + cx * (ay - by)) || 1e-9;
    const a2 = ax * ax + ay * ay, b2 = bx * bx + by * by, c2 = cx * cx + cy * cy;
    const ux = (a2 * (by - cy) + b2 * (cy - ay) + c2 * (ay - by)) / d;
    const uy = (a2 * (cx - bx) + b2 * (ax - cx) + c2 * (bx - ax)) / d;
    return { v: [a, b, c], cx: ux, cy: uy, r: (ux - ax) ** 2 + (uy - ay) ** 2 };
  };
  let tris: T[] = [make(n, n + 1, n + 2)];
  for (let i = 0; i < n; i++) {
    const [x, y] = all[i];
    const edges = new Map<string, [number, number]>();
    const keep: T[] = [];
    for (const t of tris) {
      if ((t.cx - x) ** 2 + (t.cy - y) ** 2 < t.r) {
        for (let k = 0; k < 3; k++) {
          const a = t.v[k], b = t.v[(k + 1) % 3];
          const key = a < b ? `${a}_${b}` : `${b}_${a}`;
          if (edges.has(key)) edges.delete(key);
          else edges.set(key, [a, b]);
        }
      } else keep.push(t);
    }
    edges.forEach(([a, b]) => keep.push(make(a, b, i)));
    tris = keep;
  }
  return tris.filter((t) => t.v.every((k) => k < n)).map((t) => t.v);
}

function inside([x, y]: P, poly: P[]) {
  let hit = false;
  for (let i = 0, j = poly.length - 1; i < poly.length; j = i++) {
    const [xi, yi] = poly[i], [xj, yj] = poly[j];
    if (yi > y !== yj > y && x < ((xj - xi) * (y - yi)) / (yj - yi) + xi) hit = !hit;
  }
  return hit;
}

const fmt = ([x, y]: P) => `${Math.floor(x) + 0.5} ${Math.floor(y) + 0.5}`;
const toPath = (pts: P[]) => "M" + pts.map(fmt).join("L");

const meshPath = (() => {
  const pts = [...outline, ...interior];
  const seen = new Set<string>();
  let d = toPath(outline) + "Z";
  for (const t of triangulate(pts)) {
    const c: P = [
      (pts[t[0]][0] + pts[t[1]][0] + pts[t[2]][0]) / 3,
      (pts[t[0]][1] + pts[t[1]][1] + pts[t[2]][1]) / 3,
    ];
    if (!inside(c, outline)) continue;
    for (let k = 0; k < 3; k++) {
      const a = Math.min(t[k], t[(k + 1) % 3]);
      const b = Math.max(t[k], t[(k + 1) % 3]);
      const key = `${a}_${b}`;
      if (seen.has(key)) continue;
      seen.add(key);
      d += toPath([pts[a], pts[b]]);
    }
  }
  westBreaks.split("|").forEach((s) => (d += toPath(west(s))));
  eastBreaks.split("|").forEach((s) => (d += toPath(east(s))));
  return d;
})();

/* ------------------------------------------------------------------ */
/* Contours                                                            */
/* ------------------------------------------------------------------ */

const contoursWest = `333,112 345,113 362,119|430,119 453,103 545,130 595,136 640,159 680,155 745,154 787,131 788,97 835,76 875,80 935,88 955,82|273,277 340,274 350,268|388,255 386,290 400,292 410,287 433,284 445,288 548,295 560,292 640,313 680,310 785,322 865,307 897,283|962,244 990,250|237,361 262,352|337,328 361,318 361,355 383,353 440,376 545,382 612,370 630,376 745,376 825,387 862,385|937,362 955,350 990,337|202,458 245,447 283,425|331,415 332,445 425,448 440,457 560,455 635,446 745,446 830,458 890,455|963,440 990,430|171,537 185,538 211,529 248,565 258,544|337,559 368,559 410,543 445,535 550,535 640,520 670,525 725,526 800,540 905,545|975,526 990,523|142,606 160,622|218,678 248,694 300,663 304,655 316,675 375,645 440,625 480,620 560,617 610,609 660,607 700,611 735,622 753,622|825,630 845,631 900,642 935,643 990,634|70,796 88,808 100,804 113,811 140,811|211,779 250,765 290,745 296,750 312,754 345,735 408,727 440,714 490,709 560,709 600,701 650,697 710,703 750,709 765,714|840,725 870,731|120,655 128,657 133,664 133,677|116,670 114,678|115,692 115,700|103,757 112,763 118,755|65,814 104,836|55,825 74,836`;
const contoursEast = `66,77 70,76 75,40|3,243 36,249 68,246 110,230 165,215 190,200 200,178 175,76 208,31 275,31 370,97 384,94|458,76 466,68 470,55|0,349 45,330 80,323 110,305 140,292 185,280 195,265 230,232 247,187 240,157 258,133 268,130 320,165 367,181 387,163 408,157|480,136 507,124|4,440 70,410 137,391 172,353 190,347 230,328 270,262 375,321 397,262 437,214|510,189 537,181|15,526 65,508 100,482 107,482 125,456 155,442 175,444 194,454 213,425 237,413 262,415 277,400 300,406 315,420 373,420 465,405 485,395 515,371|577,325 602,316|0,636 40,629 108,604 125,568 168,518 247,515 300,506 390,508|465,495 550,460 590,430 640,397|25,742 33,742|105,722 162,699 180,670 187,647 220,632 225,622 262,619 315,628 340,616 362,618 378,596 435,598 457,594 475,580 565,549 605,541|663,495 686,480|93,832 122,832|181,790 220,725 240,715 268,703 433,748 460,700 490,690 525,659 550,643 625,636 656,628|712,572 720,568 721,562|135,913 162,912 200,893 203,885|240,818 252,797 277,787 290,775 370,795 440,827 470,845 517,856 528,820 543,794 560,790 612,720 662,714 695,698|730,629 752,613|172,995 195,977|250,926 272,880 285,873 360,853 375,857 465,923 505,940 563,986 603,968 593,925 622,860 641,838|697,788 722,765 748,750 762,695 778,686 781,676|208,1063 227,1049|283,994 333,930 367,922 420,962 455,1015 490,1045 563,1090 640,1082 676,1066 675,1035 665,997|703,927 712,913 780,875 790,859 830,855 863,842|244,1139 263,1121|317,1067 367,1006 405,1060 468,1136 560,1186 625,1185 683,1181 742,1147 740,1087|778,1060 808,1010 870,965 917,949|273,1198 300,1198 315,1201 367,1138 403,1181 416,1207|460,1275 468,1277 486,1273|306,1273 340,1281|391,1321 425,1360`;
const indexWest = `300,205 350,202 370,182 395,173 417,170 430,167 430,187 426,195 445,187 480,194 513,199|585,223 620,238 655,244 745,249 790,238 830,230 860,193 863,163 900,163 945,169 970,163 976,157 990,157`;
const indexEast = `0,166 20,157 68,163 135,139|122,60 131,33`;

const build = (a: string, b: string) =>
  a.split("|").map((s) => toPath(parse(s, 660, 190))).join("") + b.split("|").map((s) => toPath(parse(s, 980, 190))).join("");
const contourPath = build(contoursWest, contoursEast);
const indexPath = build(indexWest, indexEast);

/* [text, x, y, rotation] */
const labels: [string, number, number, number][] = [
  ["40.5", 792, 233, 15], ["40.5", 990, 216, -2], ["40.0", 843, 261, 22], ["40.0", 1020, 223, 75],
  ["39.5", 786, 270, -42], ["39.5", 969, 275, -33], ["39.5", 1120, 218, -10],
  ["39.0", 759, 303, -14], ["39.0", 960, 316, -3], ["39.0", 1128, 239, -7],
  ["38.5", 766, 325, -26], ["38.5", 969, 340, -5], ["38.5", 1138, 256, -18],
  ["38.0", 760, 374, 2], ["38.0", 974, 370, -5], ["38.0", 1162, 305, -28],
  ["37.5", 723, 407, 45], ["37.5", 923, 399, 4], ["37.5", 1123, 357, -8],
  ["38.0", 693, 434, -48], ["37.0", 705, 428, -84], ["37.0", 719, 454, -12], ["37.0", 928, 430, 3],
  ["37.0", 1003, 435, -8], ["37.0", 1193, 365, -32],
  ["36.5", 1033, 464, -20], ["36.5", 1207, 389, -56], ["36.0", 1054, 473, -60], ["36.0", 1216, 409, -55],
  ["35.5", 1055, 507, -35], ["35.5", 1202, 459, -31], ["35.0", 1066, 530, -36], ["35.0", 1209, 511, -65],
  ["34.5", 1078, 555, -40], ["34.5", 1226, 547, 0], ["34.0", 1125, 604, 52], ["33.5", 1103, 621, 52],
];

/* ------------------------------------------------------------------ */
/* Composition                                                         */
/* ------------------------------------------------------------------ */

const menus: [string, number][] = [
  ["Project", 52], ["File", 33], ["Views", 45], ["Models", 54], ["Strings", 51], ["BIM", 36], ["CAD", 39], ["Tins", 36],
  ["Survey", 50], ["Design", 51], ["Water", 46], ["Volumes", 61], ["Plots", 41], ["Report", 50], ["Utilities", 54], ["User", 38], ["Help", 40],
];
const letterKeys: [string, number, boolean][] = [
  ["P", 21, true], ["L", 20, true], ["F", 20, true], ["X", 21, false], ["G", 22, false], ["C", 22, true], ["H", 23, false], ["T", 22, false],
  ["S", 19, false], ["I", 17, true], ["D", 22, false], ["Q", 22, true], ["A", 22, false], ["K", 21, true], ["M", 25, false],
];
const sideA = ["point", "cross", "line", "circle", "arc", "rect", "abc", "symbolPen", "leader", "dim", "table", "viewport", "sheet", "image", "move", "bearing", "colorline", "polygon", "delpoint"];
const sideB = ["sketch", "ibeam", "survey", "notepen", "section", "ramp"];
const viewTools = ["viewmenu", "plus", "minus", "fit", "pan", "zoom", "shrink", "zoomprev", "checkx", "brush", "print", "copyview", "building", "starY", "starB", "quad"];

const FieldPair = ({ w, icon, text }: { w: number; icon: string; text?: string }) => (
  <Pair>
    <Field $w={w}>{text}</Field>
    <ToolButton><Icon name={icon} /></ToolButton>
  </Pair>
);

const WindowButtons = ({ active }: { active: boolean }) => (
  <CaptionButtons>
    <CaptionButton $tone={active ? "blue" : "pale"}>
      <svg width="12" height="12"><rect x="1" y="6.500" width="10" height="4" rx="1" fill="#fff" stroke="#4a5468" /></svg>
    </CaptionButton>
    <CaptionButton $tone={active ? "blue" : "pale"}>
      <svg width="12" height="10"><rect x="1.500" y="1" width="9" height="8" fill="#fff" stroke="#4a5468" /><rect x="4.500" y="3.500" width="3" height="2.500" fill="#fff" stroke="#4a5468" /></svg>
    </CaptionButton>
    <CaptionButton $tone={active ? "red" : "pale"}>
      <svg width="14" height="10"><path d="M3 1 L11 9 M11 1 L3 9" stroke="#4a4a58" strokeWidth="4" /><path d="M3.500 1.500 L10.500 8.500 M10.500 1.500 L3.500 8.500" stroke="#fff" strokeWidth="2.200" /></svg>
    </CaptionButton>
  </CaptionButtons>
);

const PlanWindow = ({ title, active, width, view, pressed, children }: {
  title: string; active: boolean; width: number; view: [number, number, number, number]; pressed?: string; children: React.ReactNode;
}) => (
  <Win $w={width} $active={active}>
    <Caption $active={active}>
      <Icon name="plan" />
      <CaptionText>{title}</CaptionText>
      <WindowButtons active={active} />
    </Caption>
    <Client>
      <ViewBar>
        {viewTools.map((t) => (
          <ViewButton key={t} $pressed={t === pressed}>
            <IconPlate><Icon name={t} /></IconPlate>
          </ViewButton>
        ))}
      </ViewBar>
      <Canvas width={view[2]} height={view[3]} viewBox={view.join(" ")}>{children}</Canvas>
    </Client>
  </Win>
);

export default function App() {
  return (
    <Shell>
      <Global />
      <TitleBar><Icon name="app" /><span>12d Model  15.0 Alpha 295</span></TitleBar>
      <MenuBar>
        <Grip $ml={2} $mr={11} />
        {menus.map(([m, w]) => <MenuItem key={m} $w={w}>{m}</MenuItem>)}
      </MenuBar>
      <StyleBar>
        <Grip $ml={1} $mr={5} />
        <FieldPair w={89} icon="nameN" text="fence" />
        <FieldPair w={111} icon="layers" text="fence" />
        <FieldPair w={89} icon="cyan" text="cyan" />
        <FieldPair w={67} icon="zruler" />
        <FieldPair w={89} icon="linestyle" text="1" />
        <FieldPair w={45} icon="weight" />
        <Pair><Field $w={56} /><ToolButton><Icon name="down" /></ToolButton><ToolButton><Icon name="dropper" /></ToolButton></Pair>
        <Grip $ml={0} />
        <Pair><ToolButton><Icon name="fontsize" /></ToolButton></Pair>
        <FieldPair w={56} icon="bigT" text="1" />
        <FieldPair w={34} icon="ruler" text="10" />
        <Grip $ml={0} />
        <Pair><ToolButton><Icon name="symsize" /></ToolButton></Pair>
        <FieldPair w={56} icon="pinwheel" />
        <FieldPair w={34} icon="pinheight" text="10" />
        <FieldPair w={34} icon="angle" text="0°" />
        <Grip $ml={1} />
        <FieldPair w={67} icon="down" />
        <Field $w={60} />
      </StyleBar>
      <CommandBar>
        <Grip $ml={2} $mr={6} />
        <Flat $w={22}><Icon name="newfile" /></Flat>
        <Flat $w={23}><Icon name="open" /></Flat>
        <Flat $w={23}><Icon name="save" /></Flat>
        <Flat $w={26} $corner><Icon name="importD" /></Flat>
        <Flat $w={26} $corner><Icon name="exportD" /></Flat>
        <Flat $w={25} $corner><Icon name="undo" /></Flat>
        <Flat $w={22}><Icon name="redo" /></Flat>
        <Flat $w={20}><Icon name="gear" /></Flat>
        <Grip $ml={4} $mr={7} />
        <Flat $w={26} $corner><Icon name="folderCube" /></Flat>
        <Flat $w={26} $corner><Icon name="folder1" /></Flat>
        <Flat $w={26} $corner><Icon name="folder2" /></Flat>
        <Flat $w={23} $corner><Icon name="folder3" /></Flat>
        <Grip $ml={4} $mr={3} />
        <Letters>{letterKeys.map(([l, w, on]) => <Letter key={l} $w={w} $on={on}>{l}</Letter>)}</Letters>
        <Grip $ml={5} $mr={6} />
        {["point", "cross", "line", "circle", "arc"].map((n) => (
          <Flat key={n} $w={26} $corner><Boxed><Icon name={n} size={15} /></Boxed></Flat>
        ))}
        <Grip $ml={2} $mr={5} />
        <Field $w={165} />
        <Pair><span /><ToolButton><Icon name="search" /></ToolButton></Pair>
        <Grip $ml={1} $mr={8} />
        {["notepen", "tag", "network", "camView", "camImage", "camLayers", "camMesh", "camFx", "camSection", "windows", "papers", "checklist"].map((n) => (
          <Flat key={n} $w={22}><Icon name={n} /></Flat>
        ))}
        <Grip $ml={2} $mr={6} />
        <Flat $w={16}><Icon name="fx" /></Flat>
      </CommandBar>
      <Body>
        <Side>
          <SideGrip />
          {sideA.map((n) => <SideItem key={n}><Icon name={n} /></SideItem>)}
          <SideGrip $mt={5} />
          {sideB.map((n) => <SideItem key={n}><Icon name={n} /></SideItem>)}
        </Side>
        <Mdi>
          <PlanWindow title="Plan 5" active width={616} view={[46, 171, 597, 499]}>
            <path d={meshPath} fill="none" stroke="#00ff00" strokeWidth="1" shapeRendering="crispEdges" />
          </PlanWindow>
          <PlanWindow title="Plan 2" active={false} width={667} view={[662, 170, 649, 499]} pressed="pan">
            <path d={contourPath} fill="none" stroke="#00ffff" strokeWidth="1" shapeRendering="crispEdges" />
            <path d={indexPath} fill="none" stroke="#ffff00" strokeWidth="1" shapeRendering="crispEdges" />
            <g fill="#ffff00" stroke="#ffff00" strokeWidth=".8" fontFamily="Liberation Sans, Arial, sans-serif" fontSize="11.500" textAnchor="middle" letterSpacing="0">
              {labels.map(([t, x, y, r], i) => (
                <text key={i} transform={`translate(${x} ${y}) rotate(${r})`} y="4" textLength="21">{t}</text>
              ))}
            </g>
          </PlanWindow>
        </Mdi>
      </Body>
    </Shell>
  );
}
